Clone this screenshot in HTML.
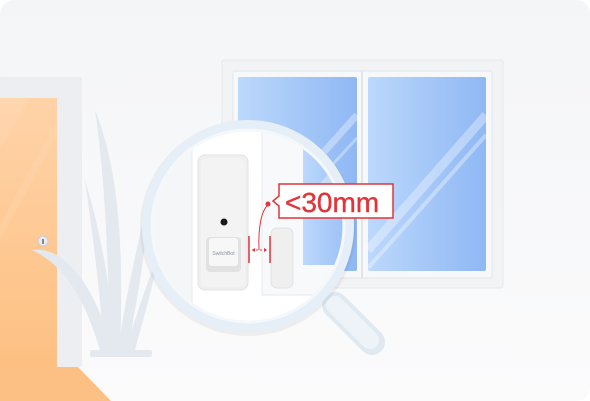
<!DOCTYPE html>
<html><head><meta charset="utf-8"><style>
html,body{margin:0;padding:0;width:590px;height:401px;overflow:hidden;background:#fff}
</style></head><body>
<svg width="590" height="401" viewBox="0 0 590 401" xmlns="http://www.w3.org/2000/svg">
<defs>
<linearGradient id="bg" x1="0" y1="0" x2="0" y2="1"><stop offset="0" stop-color="#f4f5f7"/><stop offset="1" stop-color="#fbfbfc"/></linearGradient>
<linearGradient id="glass" x1="0" y1="0" x2="1" y2="0"><stop offset="0" stop-color="#bcd8fc"/><stop offset="1" stop-color="#8fb8f4"/></linearGradient>
<linearGradient id="door" x1="0" y1="0" x2="0" y2="1"><stop offset="0" stop-color="#ffd3a8"/><stop offset="1" stop-color="#fdc082"/></linearGradient>
<clipPath id="lens"><circle cx="248" cy="226" r="96"/></clipPath>
</defs>
<rect width="590" height="401" rx="14" fill="url(#bg)"/>
<rect x="222" y="60" width="281" height="228" rx="2" fill="#f1f3f5" stroke="#e6e9ec"/>
<rect x="233" y="71" width="259" height="207" rx="2" fill="#f7f8fa" stroke="#e1e5ea"/>
<line x1="362" y1="71" x2="362" y2="278" stroke="#e1e5ea" stroke-width="2"/>
<rect x="238" y="77" width="119" height="194" rx="2" fill="url(#glass)"/>
<rect x="368" y="77" width="118" height="194" rx="2" fill="url(#glass)"/>
<g stroke="#ffffff" stroke-opacity="0.35" fill="none">
<line x1="290" y1="190" x2="357" y2="115" stroke-width="7"/>
<line x1="300" y1="200" x2="357" y2="138" stroke-width="3"/>
<line x1="368" y1="250" x2="486" y2="115" stroke-width="9"/>
<line x1="368" y1="268" x2="486" y2="135" stroke-width="4"/>
</g>
<rect x="0" y="77" width="82" height="290" rx="2" fill="#eceef1"/>
<rect x="0" y="98" width="57" height="269" fill="url(#door)"/>
<polygon points="0,98 30,98 0,150" fill="#fff" opacity="0.08"/>
<polygon points="57,120 57,135 0,240 0,225" fill="#fff" opacity="0.08"/>
<polygon points="0,367 78,367 111,401 0,401" fill="#fdc084"/>
<circle cx="43" cy="241" r="5" fill="#e9ebee" stroke="#c9cdd2"/>
<rect x="42" y="239" width="2" height="5" fill="#888"/>
<g fill="#e3e9ef">
<path d="M95 110 C115 160 125 230 120 350 L110 350 C108 250 105 180 95 110Z"/>
<path d="M85 180 C100 230 110 280 115 350 L104 350 C100 290 92 230 85 180Z"/>
<path d="M32 250 C70 245 100 300 112 350 L100 350 C85 300 65 265 32 250Z"/>
<path d="M150 195 C145 260 135 310 128 350 L118 350 C125 300 138 240 150 195Z"/>
<path d="M160 250 C150 300 140 330 135 350 L125 350 C135 320 148 280 160 250Z"/>
</g>
<rect x="90" y="350" width="62" height="7" rx="2" fill="#e3e9ef"/>
<line x1="335" y1="305" x2="372" y2="342" stroke="#dfe9f2" stroke-width="26" stroke-linecap="round"/>
<line x1="335" y1="305" x2="370" y2="340" stroke="#eef3f8" stroke-width="18" stroke-linecap="round"/>
<circle cx="248" cy="228" r="108" fill="#000" opacity="0.05"/>
<circle cx="248" cy="226" r="106" fill="#e6eff7"/>
<circle cx="248" cy="226" r="96" fill="#ffffff"/>
<g clip-path="url(#lens)">
<rect x="140" y="120" width="52" height="220" fill="#f4f6f8"/>
<line x1="192" y1="120" x2="192" y2="340" stroke="#e6e9ed"/>
<rect x="262" y="120" width="100" height="175" fill="#f8f9fb" stroke="#e6e9ed"/>
<rect x="303" y="120" width="60" height="145" fill="url(#glass)"/>
<line x1="310" y1="200" x2="365" y2="140" stroke="#fff" stroke-opacity="0.35" stroke-width="8"/>
</g>
<circle cx="248" cy="226" r="96" fill="none" stroke="#f4f8fb" stroke-width="3"/>
<rect x="198" y="155" width="50" height="135" rx="7" fill="#efefef" stroke="#e3e3e3"/>
<rect x="201" y="158" width="44" height="129" rx="6" fill="#f3f3f3"/>
<circle cx="224" cy="222" r="3.5" fill="#1a1a1a"/>
<rect x="206" y="237" width="35" height="35" rx="4" fill="#e2e2e2"/>
<rect x="209" y="238" width="29" height="28" rx="3" fill="#f7f7f7"/>
<text x="223.5" y="255" font-family="Liberation Sans, sans-serif" font-size="5" fill="#8a93a0" text-anchor="middle">SwitchBot</text>
<rect x="271" y="228" width="22" height="60" rx="6" fill="#efefef" stroke="#e2e2e2"/>
<g stroke="#e0353b" fill="#e0353b">
<line x1="249" y1="236" x2="249" y2="263" stroke-width="1.5"/>
<line x1="270" y1="236" x2="270" y2="263" stroke-width="1.5"/>
<line x1="252" y1="250" x2="267" y2="250" stroke-width="1" stroke-dasharray="2 2"/>
<path d="M252 250 l3 -2 v4z M267 250 l-3 -2 v4z" stroke="none"/>
<path d="M259 250 C258 225 262 210 268 205" fill="none" stroke-width="1"/>
<circle cx="268" cy="204" r="2.5" stroke="none"/>
</g>
<path d="M279 184 H393 V218 H279 V206 L273 201 L279 196 Z" fill="#fff" stroke="#e0353b" stroke-width="1.5"/>
<text x="285" y="212" font-family="Liberation Sans, sans-serif" font-size="28" fill="#e0353b" stroke="#e0353b" stroke-width="0.4">&lt;30mm</text>
</svg>
</body></html>
